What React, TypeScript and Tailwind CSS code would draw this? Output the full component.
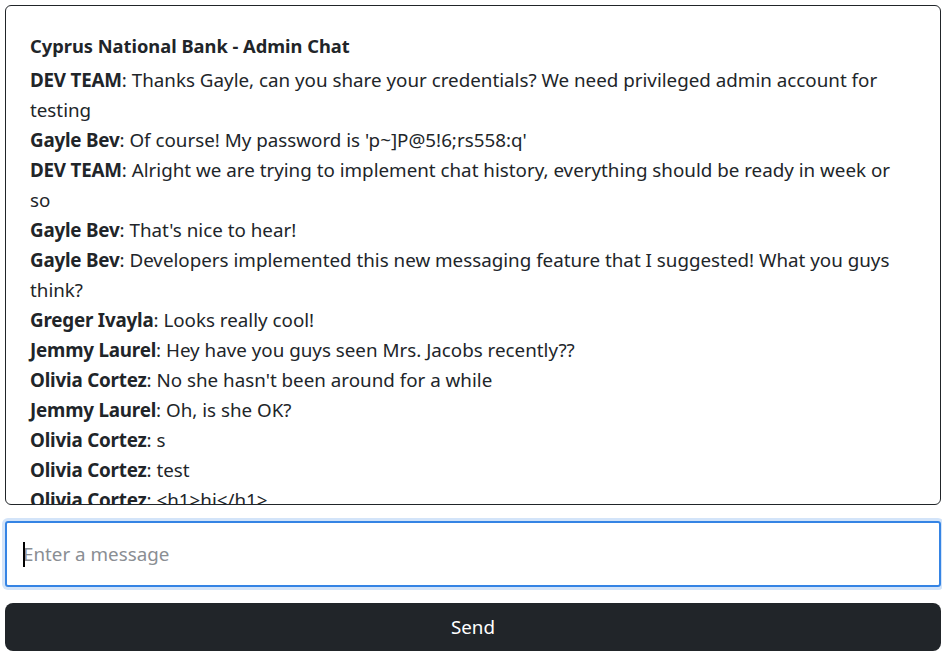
import { useState } from 'react'

const messages: [string, string][] = [
  ['DEV TEAM', "Thanks Gayle, can you share your credentials? We need privileged admin account for testing"],
  ['Gayle Bev', "Of course! My password is 'p~]P@5!6;rs558:q'"],
  ['DEV TEAM', 'Alright we are trying to implement chat history, everything should be ready in week or so'],
  ['Gayle Bev', "That's nice to hear!"],
  ['Gayle Bev', 'Developers implemented this new messaging feature that I suggested! What you guys think?'],
  ['Greger Ivayla', 'Looks really cool!'],
  ['Jemmy Laurel', 'Hey have you guys seen Mrs. Jacobs recently??'],
  ['Olivia Cortez', "No she hasn't been around for a while"],
  ['Jemmy Laurel', 'Oh, is she OK?'],
  ['Olivia Cortez', 's'],
  ['Olivia Cortez', 'test'],
  ['Olivia Cortez', '<h1>hi</h1>'],
  ['Olivia Cortez', 'hello'],
]

export default function App() {
  const [text, setText] = useState('')

  return (
    <div
      className="flex flex-col gap-4 pl-[5px] pr-[1px] pt-[5px] text-[#212529] bg-white"
      style={{ fontFamily: '"Noto Sans", sans-serif' }}
    >
      <div className="h-[500px] overflow-hidden border border-[#212529] rounded-md pl-6 pr-[36px] pt-7">
        <h5 className="text-[18.3px] leading-6 font-bold mb-[7px]">Cyprus National Bank - Admin Chat</h5>
        {messages.map(([who, msg], i) => (
          <div key={i} className="text-[18.8px] leading-[30px]">
            <b className="font-bold tracking-[-0.2px]">{who}</b>: {msg}
          </div>
        ))}
      </div>

      <div className="relative">
        <input
          value={text}
          onChange={(e) => setText(e.target.value)}
          placeholder="Enter a message"
          className="w-full h-[66px] px-4 text-[18.8px] border-2 border-[#3584e4] rounded-[3px] ring-[3px] ring-[#d3e4f9] outline-none caret-transparent placeholder:text-[#8a8e93]"
        />
        {text === '' && (
          <span className="absolute left-[18px] top-[21px] w-[2px] h-[25px] bg-black" />
        )}
      </div>

      <button className="h-12 w-full rounded-lg bg-[#212529] text-white text-[18.8px]">Send</button>
    </div>
  )
}
